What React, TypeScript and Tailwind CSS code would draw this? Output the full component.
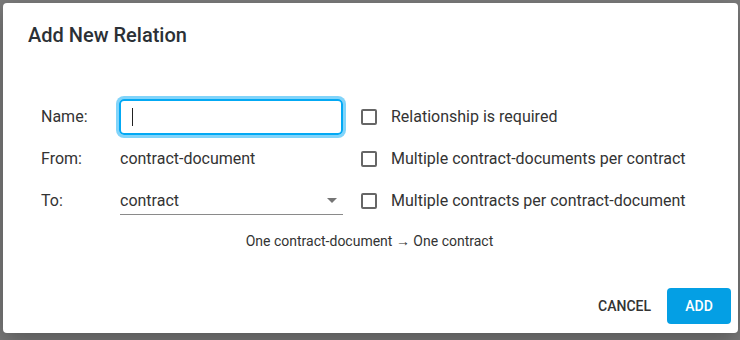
import React from 'react';

const Checkbox: React.FC<{ label: string }> = ({ label }) => {
  return (
    <label className="flex items-center h-[36px] gap-[14px] cursor-pointer">
      <span className="w-[16px] h-[16px] rounded-[2px] border-2 border-[#666] bg-white shrink-0" />
      <span className="text-[16px] text-[#333]">{label}</span>
    </label>
  );
};

const App: React.FC = () => {
  return (
    <div
      className="w-[740px] h-[340px] bg-[#7b7b7b] p-[3px] pr-[2px] pb-[7px] overflow-hidden"
      style={{ fontFamily: 'Roboto, "Noto Sans", sans-serif' }}
    >
      <div className="w-full h-full bg-white rounded-[4px] flex flex-col shadow-[0_8px_24px_rgba(0,0,0,0.3)]">
        {/* Title */}
        <h2 className="pl-[25px] pt-[20px] text-[20px] font-medium text-[#2b3035] leading-[24px]">
          Add New Relation
        </h2>

        {/* Form */}
        <div className="flex pt-[52px] pl-[38px]">
          <div className="flex flex-col gap-[6px] w-[302px]">
            <div className="flex items-center h-[36px]">
              <span className="w-[78px] text-[16px] text-[#333]">Name:</span>
              <div className="w-[224px] h-[36px] rounded-[5px] border-2 border-[#03a9f4] ring-[3px] ring-[#81d4fa] flex items-center pl-[11px]">
                <span className="w-[1px] h-[18px] bg-[#222]" />
              </div>
            </div>
            <div className="flex items-center h-[36px]">
              <span className="w-[79px] text-[16px] text-[#333]">From:</span>
              <span className="text-[16px] text-[#333]">contract-document</span>
            </div>
            <div className="flex items-center h-[36px]">
              <span className="w-[79px] text-[16px] text-[#333]">To:</span>
              <div className="w-[223px] h-[28px] flex items-center justify-between border-b border-[#8a8a8a] pr-[6px]">
                <span className="text-[16px] text-[#333]">contract</span>
                <svg width="10" height="5" viewBox="0 0 10 5">
                  <path d="M0 0 L10 0 L5 5 Z" fill="#757575" />
                </svg>
              </div>
            </div>
          </div>
          <div className="flex flex-col gap-[6px] pl-[18px]">
            <Checkbox label="Relationship is required" />
            <Checkbox label="Multiple contract-documents per contract" />
            <Checkbox label="Multiple contracts per contract-document" />
          </div>
        </div>

        <p className="text-center text-[14px] text-[#333] mt-[12px] pr-[2px]">
          One contract-document → One contract
        </p>

        {/* Actions */}
        <div className="mt-auto flex justify-end items-center gap-[16px] pr-[7px] pb-[9px]">
          <button className="text-[14px] font-medium text-[#333] uppercase">Cancel</button>
          <button className="w-[64px] h-[36px] bg-[#049fe4] rounded-[4px] text-[14px] font-medium text-white uppercase">
            Add
          </button>
        </div>
      </div>
    </div>
  );
};

export default App;
